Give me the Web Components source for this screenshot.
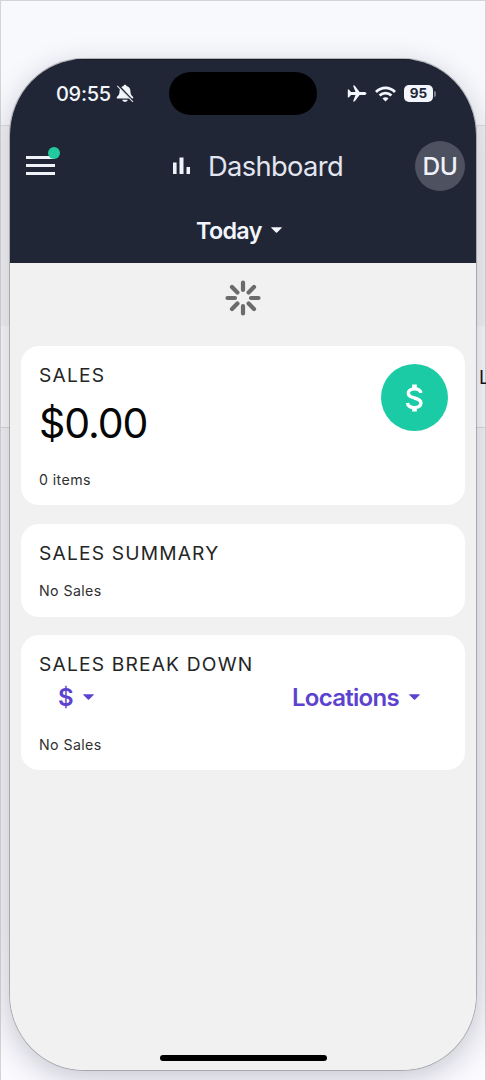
<!DOCTYPE html>
<html lang="en">
<head>
<meta charset="utf-8">
<title>Dashboard</title>
<style>
html,body{margin:0;height:1080px;overflow:hidden;background:#f8f9fd;font-family:Inter,"Liberation Sans",sans-serif}
</style>
</head>
<body>
<app-stage></app-stage>
<script>
const define = (name, html) => {
  const t = document.createElement('template');
  t.innerHTML = html;
  customElements.define(name, class extends HTMLElement {
    constructor() {
      super();
      this.attachShadow({mode: 'open'}).append(t.content.cloneNode(true));
    }
  });
};

define('page-backdrop', `<style>
:host{display:grid;grid-template-rows:124px 201px 102px 1fr;height:1080px;width:486px;box-sizing:border-box;border:1px solid #d4d4d7;border-bottom:0}
.b{border-top:1px solid #dedee1;background:#f1f1f4}
.c{background:#f9f9fb;border-bottom:1px solid #d9d9dc;display:flex;justify-content:flex-end}
.c span{font-size:19px;line-height:24px;color:#15151e;margin-top:40px;width:6px;white-space:nowrap}
.d{background:linear-gradient(#f1f1f5 75%,#fafaff)}
</style><div></div><div class="b"></div><div class="c"><span>L</span></div><div class="d"></div>`);

define('status-bar', `<style>
:host{display:grid;grid-template-columns:159px 148px 1fr;height:70px;color:#f3f6fc}
.left{display:flex;align-items:center;padding:0 0 3px 46px;gap:5px;font-size:20px;font-weight:500;letter-spacing:-.3px}
.island{background:#000;border-radius:22px;height:43px;margin-top:12px}
.right{display:flex;align-items:center;padding:0 0 3px 30px;gap:8px}
.batt{width:29px;height:17px;border-radius:5px;background:#f3f6fc;color:#202636;font-size:13.5px;font-weight:700;line-height:17px;text-align:center}
.cap{width:2px;height:6px;border-radius:0 2px 2px 0;background:#7c818d;margin-left:-7px}
svg{display:block}
</style>
<div class="left"><span>09:55</span><svg width="18" height="19" viewBox="0 0 18 19"><path d="M9 .8c-.9 0-1.400.6-1.500 1.300C4.700 2.900 3.500 5 3.500 7.700c0 3-1.300 3.800-2.600 5.400-.5.8-.1 1.500.8 1.500h14.600c.9 0 1.300-.7.800-1.500-1.300-1.600-2.600-2.400-2.600-5.400 0-2.700-1.200-4.800-4-5.600C10.400 1.400 9.900.8 9 .8zM6.300 15.700h5.400c-.2 1.400-1.300 2.100-2.700 2.100s-2.500-.7-2.700-2.100z" fill="#f3f6fc"/><path d="M2.200 1.200l15 15.800" stroke="#202636" stroke-width="1.800"/><path d="M1.200 1.900l15.800 16" stroke="#e3e6ee" stroke-width="1.100"/></svg></div>
<div class="island"></div>
<div class="right"><svg width="20" height="17" viewBox="0 0 20 17"><path d="M19.500 8.500c0-.9-1.200-1.500-2.600-1.500h-4.300L8 .9C7.800.6 7.500.5 7.100.5H6l2.500 6.500H4L2.300 4.900C2.100 4.600 1.900 4.500 1.500 4.500H.8v8h.7c.4 0 .6-.1.800-.4L4 10h4.500L6 16.500h1.100c.4 0 .7-.1.900-.4l4.600-6.100h4.300c1.400 0 2.600-.6 2.600-1.500z" fill="#f3f6fc"/></svg>
<svg width="21" height="16" viewBox="0 0 21 16" fill="none" stroke="#f3f6fc" stroke-width="2.800"><path d="M1 5.900C6.400.4 14.600.4 20 5.900"/><path d="M4.600 9.500c3.300-3.300 8.500-3.300 11.800 0"/><path d="M10.500 15.500l-3-3.100c1.700-1.500 4.300-1.500 6 0z" fill="#f3f6fc" stroke="none"/></svg>
<div class="batt">95</div><div class="cap"></div></div>`);

define('menu-button', `<style>
:host{display:block;position:relative;width:29px;height:20px}
i{display:block;height:3px;background:#f0f2fa;margin-bottom:5px}
b{position:absolute;width:12px;height:12px;border-radius:50%;background:#22c99f;left:22px;top:-9px}
</style><i></i><i></i><i></i><b></b>`);

define('drop-arrow', `<style>
:host{display:block;width:11px;height:6px}
svg{display:block}
</style><svg width="11" height="6" viewBox="0 0 11 6"><path d="M.4.2h10.200q.5.200 0 .7L6.100 5.400q-.6.500-1.200 0L.4.900q-.5-.5 0-.7z" fill="currentColor"/></svg>`);

define('app-header', `<style>
:host{display:block;height:204px;background:#202636;color:#f0f2fa;border-top:1px solid #171b27;box-sizing:border-box}
.row{display:grid;grid-template-columns:146px 1fr 60px;height:72px;align-items:center}
menu-button{margin-left:16px;margin-top:-1px}
.title{display:flex;align-items:center;gap:18px;padding-left:17px;font-size:27.300px;letter-spacing:-.650px;color:#e3e5ef;font-weight:400}
.avatar{width:50px;height:50px;border-radius:50%;background:#4d5160;display:grid;place-items:center;font-size:24.500px;font-weight:500;color:#f0f2fa;letter-spacing:-.5px;margin-left:-1px}
.period{display:flex;align-items:center;gap:9px;height:56px;padding-left:186px;font-size:23.300px;letter-spacing:-.65px;font-weight:600;color:#f3f5fc}
</style>
<status-bar></status-bar>
<div class="row"><menu-button></menu-button><div class="title"><svg width="17" height="18" viewBox="0 0 17 18" fill="#f0f2fa"><path d="M0 5.500h3.600V17H0zM6.500.5h4V17h-4zM13.500 10H17v7h-3.500z"/></svg><span>Dashboard</span></div><div class="avatar">DU</div></div>
<div class="period"><span>Today</span><drop-arrow></drop-arrow></div>`);

define('load-spinner', `<style>
:host{display:flex;justify-content:center;padding-top:17px;height:66px;box-sizing:content-box}
svg{display:block}
</style><svg width="36" height="36" viewBox="-18 -18 36 36" stroke="#6b6b6b" stroke-width="4.200" stroke-linecap="round"><path d="M0-8V-15.500M0 8V15.500M-8 0H-15.500M8 0H15.500M-5.600-5.600L-11-11M5.600 5.600L11 11M-5.600 5.600L-11 11M5.600-5.600L11-11"/></svg>`);

define('info-card', `<style>
:host{display:block;background:#fff;border-radius:18px;padding:0 18px;box-sizing:border-box;color:#252525}
h2{margin:0;padding:17px 0 1px;font-size:19.200px;line-height:24px;font-weight:400;letter-spacing:1.180px;white-space:nowrap}
</style><h2><slot name="heading"></slot></h2><slot></slot>`);

define('small-note', `<style>:host{display:block;font-size:14.200px;line-height:18px;letter-spacing:.4px;color:#303030}</style><slot></slot>`);

define('sales-total', `<style>
:host{display:flex;justify-content:space-between;height:118px}
.amount{font-size:41px;line-height:48px;color:#060606;padding-top:11px;margin-bottom:24px;letter-spacing:-1.050px}
.badge{width:67px;height:67px;border-radius:50%;background:#1acba5;margin-top:-24px;display:grid;place-items:center;margin-right:-1px}
svg{display:block;margin-left:-1px}
</style><div><div class="amount">$0.00</div><small-note>0 items</small-note></div>
<div class="badge"><svg width="19" height="30" viewBox="0 0 20 32" fill="none" stroke="#fff" stroke-width="3.600"><path d="M17 10.500C16.200 7.500 13.500 6.200 10 6.200c-4 0-6.600 1.900-6.600 4.700 0 3.300 3 4.100 6.600 5.100 4 1.100 6.900 2.200 6.900 5.400 0 3-2.800 4.800-6.900 4.800-4.200 0-7-1.600-7.500-4.900"/><path d="M10 1.500v5M10 25.500v5" stroke-width="5"/></svg></div>`);

define('filter-row', `<style>
:host{display:flex;justify-content:space-between;align-items:center;height:44px;padding:0 27px 0 19px;color:#5c43cf;font-size:24px;font-weight:600;letter-spacing:-.700px}
div{display:flex;align-items:center;gap:10px}
</style><div><span>$</span><drop-arrow></drop-arrow></div><div><span>Locations</span><drop-arrow></drop-arrow></div>`);

define('phone-screen', `<style>
:host{display:flex;flex-direction:column;width:466px;height:1011px;border-radius:74px / 76px;overflow:hidden;background:#f1f1f1}
main{flex:1;display:flex;flex-direction:column;gap:18px;padding:0 11px}
load-spinner{margin-bottom:-18px}
.one{height:159px}.two{height:93px;margin-top:1px}.three{height:135px}
.two small-note{margin-top:16px}
.three filter-row{margin-top:-2px}
.three small-note{margin-top:17px}
.home{width:167px;height:6px;border-radius:3px;background:#000;margin:0 auto 9px}
</style>
<app-header></app-header>
<main><load-spinner></load-spinner>
<info-card class="one"><span slot="heading">SALES</span><sales-total></sales-total></info-card>
<info-card class="two"><span slot="heading">SALES SUMMARY</span><small-note>No Sales</small-note></info-card>
<info-card class="three"><span slot="heading">SALES BREAK DOWN</span><filter-row></filter-row><small-note>No Sales</small-note></info-card>
</main><div class="home"></div>`);

define('app-stage', `<style>
:host{display:grid;width:486px;height:1080px;overflow:hidden}
page-backdrop,.hold{grid-area:1/1}
.hold{padding:59px 0 0 10px;z-index:1}
.frame{width:466px;border-radius:74px / 76px;box-shadow:0 0 0 1px rgba(110,110,112,.45),0 8px 30px rgba(20,20,40,.22)}
</style><page-backdrop></page-backdrop><div class="hold"><div class="frame"><phone-screen></phone-screen></div></div>`);
</script>
</body>
</html>
